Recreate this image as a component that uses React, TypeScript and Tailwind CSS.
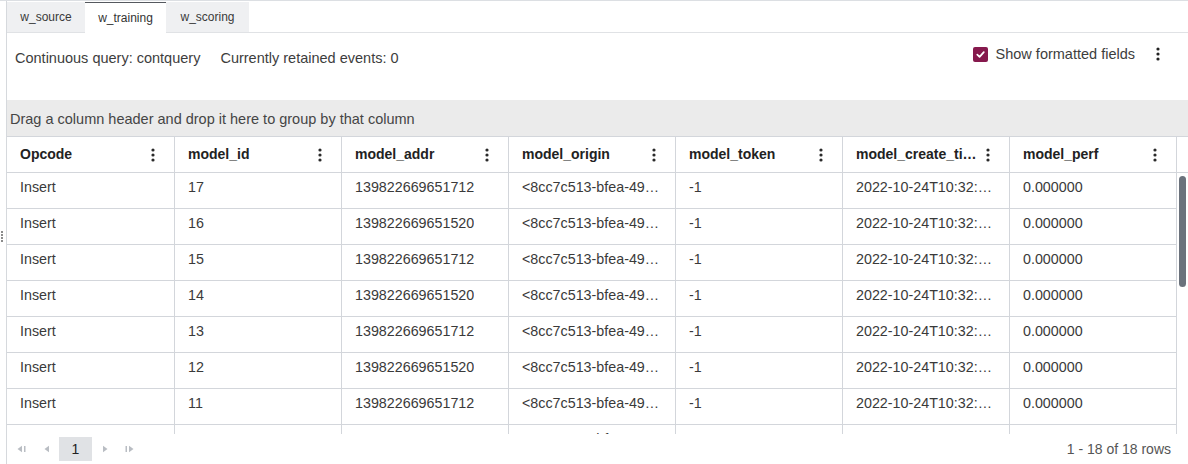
const columns = [
  "Opcode",
  "model_id",
  "model_addr",
  "model_origin",
  "model_token",
  "model_create_time",
  "model_perf",
];

const rows = [17, 16, 15, 14, 13, 12, 11, 10].map((id) => [
  "Insert",
  String(id),
  id % 2 === 1 ? "139822669651712" : "139822669651520",
  "<8cc7c513-bfea-4963-a1b0-6d0f6c1d9a4e>",
  "-1",
  "2022-10-24T10:32:45.118733",
  "0.000000",
]);

const Kebab = ({ className = "" }: { className?: string }) => (
  <svg width="4" height="14" viewBox="0 0 4 14" className={className}>
    <circle cx="2" cy="2" r="1.6" fill="currentColor" />
    <circle cx="2" cy="7" r="1.6" fill="currentColor" />
    <circle cx="2" cy="12" r="1.6" fill="currentColor" />
  </svg>
);

const Tab = ({ label, active }: { label: string; active?: boolean }) => (
  <div
    className={
      active
        ? "h-full flex items-center justify-center bg-white border-t border-[#55595f] text-[12px] text-[#333]"
        : "h-full flex items-center justify-center bg-[#eff0f2] border-b border-[#e0e2e5] text-[12px] text-[#3a3a3a]"
    }
  >
    {label}
  </div>
);

const App = () => {
  return (
    <div className="w-[1188px] h-[464px] bg-white border-t border-[#dcdfe3] flex overflow-hidden font-['Liberation_Sans',Arial,sans-serif]">
      {/* splitter gutter */}
      <div className="w-[6px] flex items-center justify-start pl-px">
        <div className="flex flex-col gap-px mt-[8px]">
          <span className="w-[2px] h-[2px] bg-[#8c8c8c]" />
          <span className="w-[2px] h-[2px] bg-[#8c8c8c]" />
          <span className="w-[2px] h-[2px] bg-[#8c8c8c]" />
          <span className="w-[2px] h-[2px] bg-[#8c8c8c]" />
        </div>
      </div>

      <div className="flex-1 border-l border-[#d6d9dd] flex flex-col min-w-0">
        {/* tabs */}
        <div className="h-[32px] flex pt-px">
          <div className="w-[78px]">
            <Tab label="w_source" />
          </div>
          <div className="w-[81px]">
            <Tab label="w_training" active />
          </div>
          <div className="w-[83px]">
            <Tab label="w_scoring" />
          </div>
          <div className="flex-1 border-b border-[#e0e2e5]" />
        </div>

        {/* toolbar */}
        <div className="h-[67px] flex justify-between items-start text-[14.5px] text-[#3d3d3d]">
          <div className="flex gap-[20px] pl-[8px] pt-[15px] leading-5">
            <span>Continuous query: contquery</span>
            <span>Currently retained events: 0</span>
          </div>
          <div className="flex items-center pt-[11px] pr-[28px] leading-5">
            <span className="w-[15px] h-[15px] rounded-[2px] bg-[#86194d] flex items-center justify-center">
              <svg width="11" height="11" viewBox="0 0 12 12">
                <path d="M2.5 6.2 L5 8.6 L9.6 3.4" stroke="white" strokeWidth="1.9" fill="none" strokeLinecap="round" strokeLinejoin="round" />
              </svg>
            </span>
            <span className="ml-[8px]">Show formatted fields</span>
            <Kebab className="ml-[21px] text-[#222]" />
          </div>
        </div>

        {/* group panel */}
        <div className="h-[36px] bg-[#ebebeb] flex items-center pt-[3px] pl-[3px] text-[14.5px] text-[#454545]">
          Drag a column header and drop it here to group by that column
        </div>

        {/* header */}
        <div className="flex border-t border-b border-[#d3d6db] h-[37px]">
          {columns.map((c, i) => (
            <div
              key={c}
              className={`${i === 0 ? "w-[168px]" : "w-[167px]"} border-r border-[#d3d6db] flex items-center pl-[13px] pr-[19px] gap-[6px]`}
            >
              <span className="flex-1 min-w-0 truncate font-bold text-[14px] text-[#222]">{c}</span>
              <Kebab className="text-[#2a2a2a] shrink-0" />
            </div>
          ))}
          <div className="flex-1" />
        </div>

        {/* body */}
        <div className="h-[261px] flex overflow-hidden">
          <div className="w-[1170px] flex flex-col">
            {rows.map((r, ri) => (
              <div key={ri} className="flex h-[36px] shrink-0 border-b border-[#d3d6db]">
                {r.map((v, ci) => (
                  <div
                    key={ci}
                    className={`${ci === 0 ? "w-[168px]" : "w-[167px]"} border-r border-[#d3d6db] flex items-center pb-[6px] pl-[13px] pr-[14px] min-w-0`}
                  >
                    <span className="truncate text-[14.3px] text-[#3a3a3a]">{v}</span>
                  </div>
                ))}
              </div>
            ))}
          </div>
          <div className="flex-1 pt-[3px] pl-[2px] pr-[2px]">
            <div className="w-[7px] h-[111px] rounded-full bg-[#6b727c]" />
          </div>
        </div>

        {/* pager */}
        <div className="h-[30px] flex items-center justify-between pl-[10px] pr-[17px]">
          <div className="flex items-center text-[#b9bdc3]">
            <svg width="9" height="8" viewBox="0 0 9 8">
              <path d="M0.5 4 L5 0.8 L5 7.2 Z" fill="currentColor" />
              <rect x="7" y="1" width="1.5" height="6" fill="currentColor" />
            </svg>
            <svg width="6" height="8" viewBox="0 0 6 8" className="ml-[18px]">
              <path d="M0.5 4 L5 0.8 L5 7.2 Z" fill="currentColor" />
            </svg>
            <div className="ml-[9px] w-[33px] h-[24px] bg-[#e0e2e5] flex items-center justify-center text-[14px] text-[#222]">
              1
            </div>
            <svg width="6" height="8" viewBox="0 0 6 8" className="ml-[10px]">
              <path d="M5.5 4 L1 0.8 L1 7.2 Z" fill="currentColor" />
            </svg>
            <svg width="9" height="8" viewBox="0 0 9 8" className="ml-[17px]">
              <rect x="0.5" y="1" width="1.5" height="6" fill="currentColor" />
              <path d="M8.5 4 L4 0.8 L4 7.2 Z" fill="currentColor" />
            </svg>
          </div>
          <span className="text-[14px] text-[#555]">1 - 18 of 18 rows</span>
        </div>
      </div>
    </div>
  );
};

export default App;
